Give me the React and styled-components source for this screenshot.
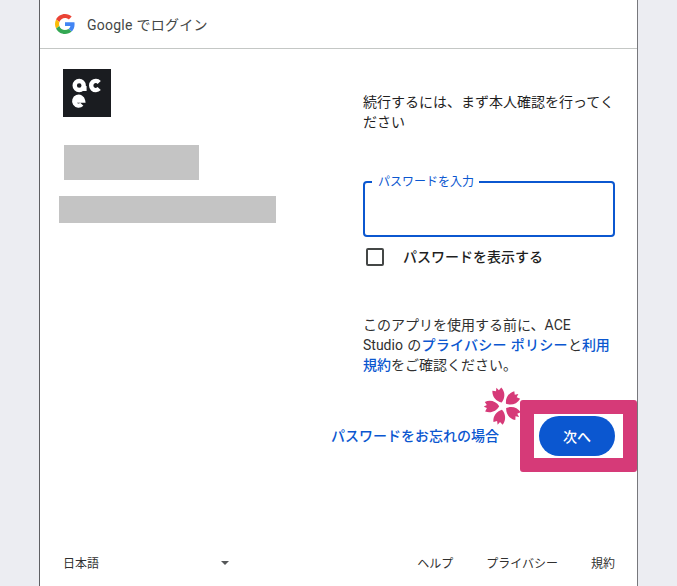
import React from 'react'
import styled, { createGlobalStyle } from 'styled-components'

const GlobalStyle = createGlobalStyle`
  html, body {
    margin: 0;
    padding: 0;
    height: 586px;
    overflow: hidden;
    background: #ecedf2;
    font-family: Roboto, "Noto Sans CJK JP", sans-serif;
    color: #1f1f1f;
  }
  * { box-sizing: border-box; }
`

const Dialog = styled.div`
  width: 599px;
  height: 586px;
  margin-left: 39px;
  background: white;
  border-left: 1px solid #5f6064;
  border-right: 1px solid #77787c;
  display: flex;
  flex-direction: column;
`

const Header = styled.div`
  height: 49px;
  flex: none;
  display: flex;
  align-items: center;
  gap: 12px;
  padding: 0 0 0 15px;
  border-bottom: 1px solid #c4c7c5;
  font-size: 14px;
  color: #444746;
  letter-spacing: 0.25px;
`

const Columns = styled.div`
  display: flex;
  padding-left: 23px;
`

const Left = styled.div`
  width: 300px;
  flex: none;
  padding-top: 20px;
  display: flex;
  flex-direction: column;
  align-items: flex-start;
`

const Right = styled.div`
  width: 252px;
  flex: none;
  padding-top: 44px;
`

const Redacted = styled.div`
  background: #c4c4c4;
  width: ${p => p.$w}px;
  height: ${p => p.$h}px;
  margin-top: ${p => p.$top}px;
  margin-left: ${p => p.$left}px;
`

const Intro = styled.p`
  margin: 0;
  font-size: 14px;
  line-height: 19.5px;
`

const Field = styled.fieldset`
  margin: 44px 0 0;
  padding: 0 7px;
  height: 61px;
  border: 2px solid #0b57d0;
  border-radius: 4px;
  min-width: 0;
`

const FieldLabel = styled.legend`
  padding: 0 5px 0 6px;
  font-size: 12px;
  line-height: 12px;
  color: #0b57d0;
`

const CheckRow = styled.label`
  display: flex;
  align-items: center;
  gap: 19px;
  margin: 11px 0 0 3px;
  height: 18px;
  font-size: 14px;
  font-weight: 500;
`

const CheckBox = styled.span`
  width: 18px;
  height: 18px;
  border: 2px solid #444746;
  border-radius: 2px;
`

const CheckText = styled.span`
  margin-top: -2px;
`

const Notice = styled.p`
  margin: 49px 0 0;
  font-size: 14px;
  line-height: 20px;
  color: #303030;
  word-spacing: 1px;
`

const TextLink = styled.a`
  color: #0b57d0;
  font-weight: 500;
  text-decoration: none;
`

const PolicyLink = styled(TextLink)`
  word-spacing: 0;
  letter-spacing: 0.3px;
`

const Actions = styled.div`
  margin-top: 25px;
  display: flex;
  justify-content: flex-end;
  align-items: center;
  gap: 21px;
`

const ForgotLink = styled(TextLink)`
  font-size: 14px;
  margin-top: -3px;
`

const Highlight = styled.div`
  position: relative;
  width: 117px;
  height: 72px;
  border: 14px solid #d63a78;
  border-radius: 3px;
  padding: 2px 5px;
`

const NextButton = styled.button`
  width: 76px;
  height: 40px;
  border: none;
  border-radius: 20px;
  background: #0b57d0;
  color: white;
  font-family: inherit;
  font-size: 14px;
  font-weight: 500;
  padding: 0;
`

const Blossom = styled.svg`
  position: absolute;
  left: -50px;
  top: -27px;
  width: 38px;
  height: 38px;
`

const Footer = styled.div`
  margin-top: auto;
  height: 44px;
  padding: 0 22px 4px 23px;
  display: flex;
  align-items: center;
  justify-content: space-between;
  font-size: 12px;
  color: #303030;
`

const Language = styled.div`
  width: 166px;
  display: flex;
  align-items: center;
  justify-content: space-between;
`

const Caret = styled.span`
  width: 0;
  height: 0;
  margin-top: 1px;
  border-left: 4.5px solid transparent;
  border-right: 4.5px solid transparent;
  border-top: 4.5px solid #555759;
`

const FooterLinks = styled.div`
  display: flex;
  gap: 33px;
`

const GoogleLogo = () => (
  <svg width="20" height="20" viewBox="0 0 48 48">
    <path fill="#EA4335" d="M24 9.5c3.54 0 6.71 1.22 9.21 3.6l6.85-6.85C35.9 2.38 30.47 0 24 0 14.62 0 6.51 5.38 2.56 13.22l7.98 6.19C12.43 13.72 17.74 9.5 24 9.5z" />
    <path fill="#4285F4" d="M46.98 24.55c0-1.57-.15-3.09-.38-4.55H24v9.02h12.94c-.58 2.96-2.26 5.48-4.78 7.18l7.73 6c4.51-4.18 7.09-10.36 7.09-17.65z" />
    <path fill="#FBBC05" d="M10.53 28.59c-.48-1.45-.76-2.99-.76-4.59s.27-3.14.76-4.59l-7.98-6.19C.92 16.46 0 20.12 0 24c0 3.88.92 7.54 2.56 10.78l7.97-6.19z" />
    <path fill="#34A853" d="M24 48c6.48 0 11.93-2.13 15.89-5.81l-7.73-6c-2.15 1.45-4.92 2.3-8.16 2.3-6.26 0-11.57-4.22-13.47-9.91l-7.98 6.19C6.51 42.62 14.62 48 24 48z" />
  </svg>
)

const AceLogo = () => (
  <svg width="48" height="48" viewBox="0 0 48 48">
    <rect width="48" height="48" fill="#1a1c20" />
    <g fill="none" stroke="white" strokeWidth="4.4">
      <circle cx="16.2" cy="16.5" r="4.5" />
      <path d="M21.4 17v5" />
      <path d="M36.2 13.4a4.6 4.6 0 1 0 0 6.2" />
      <path d="M11.8 31.5h8.2a4.4 4.4 0 1 0-1.2 3.8" />
    </g>
  </svg>
)

const Sakura = () => (
  <Blossom viewBox="-20 -20 40 40">
    {[-20, 52, 124, 196, 268].map(angle => (
      <path
        key={angle}
        transform={`rotate(${angle})`}
        fill="#d63a78"
        d="M0-4C-5-7-7.5-13-5-19L-1.6-17 0-20.5 1.6-17 5-19C7.5-13 5-7 0-4z"
      />
    ))}
  </Blossom>
)

export default function App() {
  return (
    <>
      <GlobalStyle />
      <Dialog>
        <Header>
          <GoogleLogo />
          <span>Google でログイン</span>
        </Header>
        <Columns>
          <Left>
            <AceLogo />
            <Redacted $w={135} $h={35} $top={28} $left={1} />
            <Redacted $w={217} $h={27} $top={16} $left={-4} />
          </Left>
          <Right>
            <Intro>続行するには、まず本人確認を行ってください</Intro>
            <Field>
              <FieldLabel>パスワードを入力</FieldLabel>
            </Field>
            <CheckRow>
              <CheckBox />
              <CheckText>パスワードを表示する</CheckText>
            </CheckRow>
            <Notice>
              このアプリを使用する前に、ACE<br />
              Studio の<PolicyLink href="#">プライバシー ポリシー</PolicyLink>と<TextLink href="#">利用<br />規約</TextLink>をご確認ください。
            </Notice>
          </Right>
        </Columns>
        <Actions>
          <ForgotLink href="#">パスワードをお忘れの場合</ForgotLink>
          <Highlight>
            <Sakura />
            <NextButton>次へ</NextButton>
          </Highlight>
        </Actions>
        <Footer>
          <Language>
            日本語
            <Caret />
          </Language>
          <FooterLinks>
            <span>ヘルプ</span>
            <span>プライバシー</span>
            <span>規約</span>
          </FooterLinks>
        </Footer>
      </Dialog>
    </>
  )
}
